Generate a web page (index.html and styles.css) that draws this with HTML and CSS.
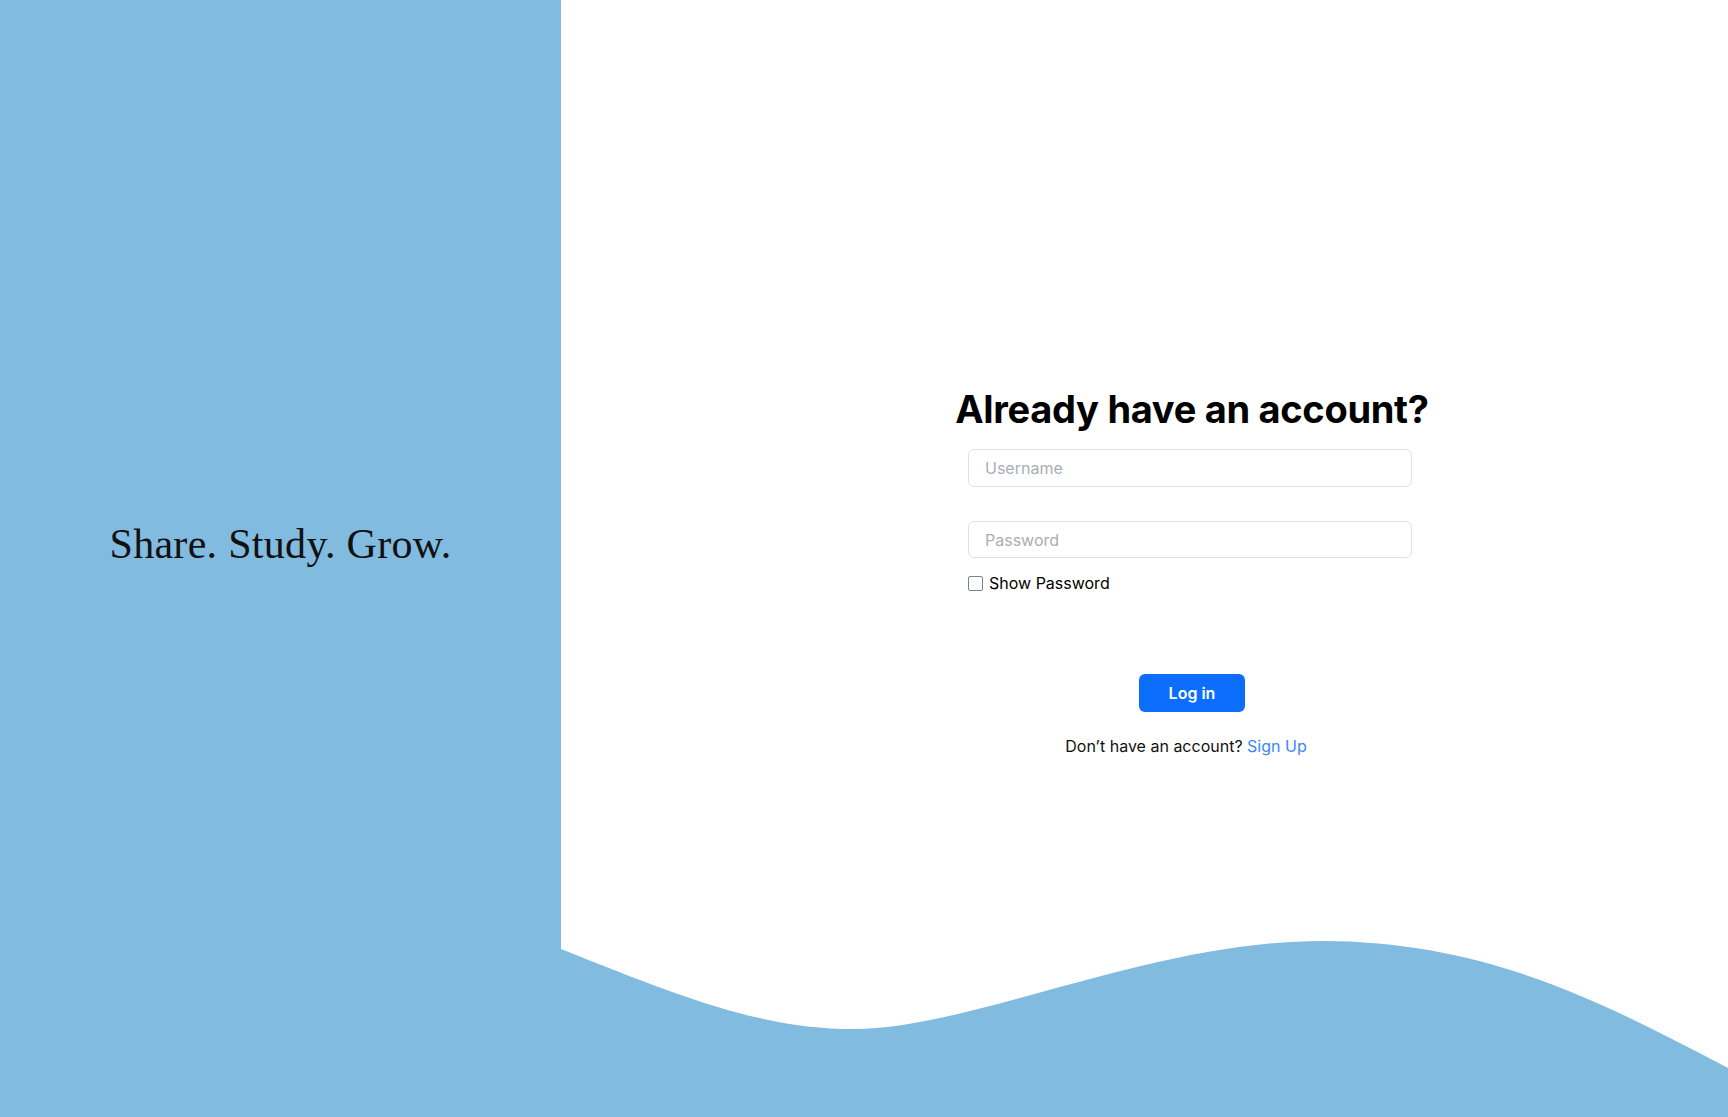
FILE: index.html
```html
<!DOCTYPE html>
<html lang="en">
<head>
<meta charset="utf-8">
<title>Log in</title>
<link rel="stylesheet" href="styles.css">
</head>
<body>
<div class="page">
  <aside class="left">
    <p class="tagline">Share. Study. Grow.</p>
  </aside>
  <main class="right">
    <form class="form">
      <h1 class="title">Already have an account?</h1>
      <input class="field" type="text" placeholder="Username">
      <input class="field field-pass" type="password" placeholder="Password">
      <label class="check-row"><input class="check" type="checkbox"><span>Show Password</span></label>
      <button class="btn" type="button">Log in</button>
      <p class="signup">Don’t have an account? <a href="#" class="link">Sign Up</a></p>
    </form>
    <svg class="wave" viewBox="0 0 1167 187" preserveAspectRatio="none" aria-hidden="true">
      <path d="M0,19 C120,67 200,99 293,99 C410,99 590,11 761,11 C930,11 1050,77 1167,138 L1167,187 L0,187 Z" fill="#81bbdf"/>
    </svg>
  </main>
</div>
</body>
</html>
```
FILE: styles.css
```css
* { box-sizing: border-box; }
html, body { margin: 0; padding: 0; }
body {
  font-family: Inter, "Noto Sans", sans-serif;
  color: #000;
  background: #fff;
}
.page {
  display: flex;
  height: 100vh;
  overflow: hidden;
}
.left {
  width: 561px;
  flex: 0 0 561px;
  background: #81bbdf;
  display: flex;
  align-items: center;
  justify-content: center;
  padding-bottom: 29px;
}
.tagline {
  margin: 0;
  font-family: "Liberation Serif", "Times New Roman", serif;
  font-size: 42px;
  letter-spacing: 0.3px;
  color: #111;
}
.right {
  flex: 1;
  position: relative;
  background: #fff;
}
.form {
  width: 480px;
  margin-left: 391px;
  padding-top: 386px;
  display: flex;
  flex-direction: column;
  align-items: center;
}
.title {
  margin: 0 0 17px;
  font-size: 38px;
  line-height: 46px;
  font-weight: 700;
  white-space: nowrap;
  letter-spacing: -0.3px;
}
.field {
  width: 444px;
  height: 38px;
  margin-right: 4px;
  border: 1px solid #dee2e6;
  border-radius: 6px;
  padding: 0 16px;
  font-family: inherit;
  font-size: 16px;
  color: #212529;
  outline: none;
  background: #fff;
}
.field::placeholder { color: #a9aeb4; }
.field-pass { margin-top: 34px; height: 37px; }
.check-row {
  width: 444px;
  margin-right: 4px;
  display: flex;
  align-items: center;
  gap: 6px;
  margin-top: 15px;
  font-size: 16px;
  line-height: 20px;
}
.check {
  appearance: none;
  -webkit-appearance: none;
  margin: 0;
  width: 15px;
  height: 15px;
  border: 1px solid #7d8288;
  border-radius: 2px;
  background: #fff;
}
.btn {
  margin-top: 81px;
  width: 106px;
  height: 38px;
  border: none;
  border-radius: 6px;
  background: #0d6efd;
  color: #fff;
  font-family: inherit;
  font-size: 16px;
  font-weight: 600;
}
.signup {
  margin: 22px 12px 0 0;
  font-size: 16px;
  line-height: 24px;
  color: #111;
}
.link {
  color: #3b86f6;
  text-decoration: none;
}
.wave {
  position: absolute;
  left: 0;
  bottom: 0;
  width: 100%;
  height: 187px;
  display: block;
}
```
